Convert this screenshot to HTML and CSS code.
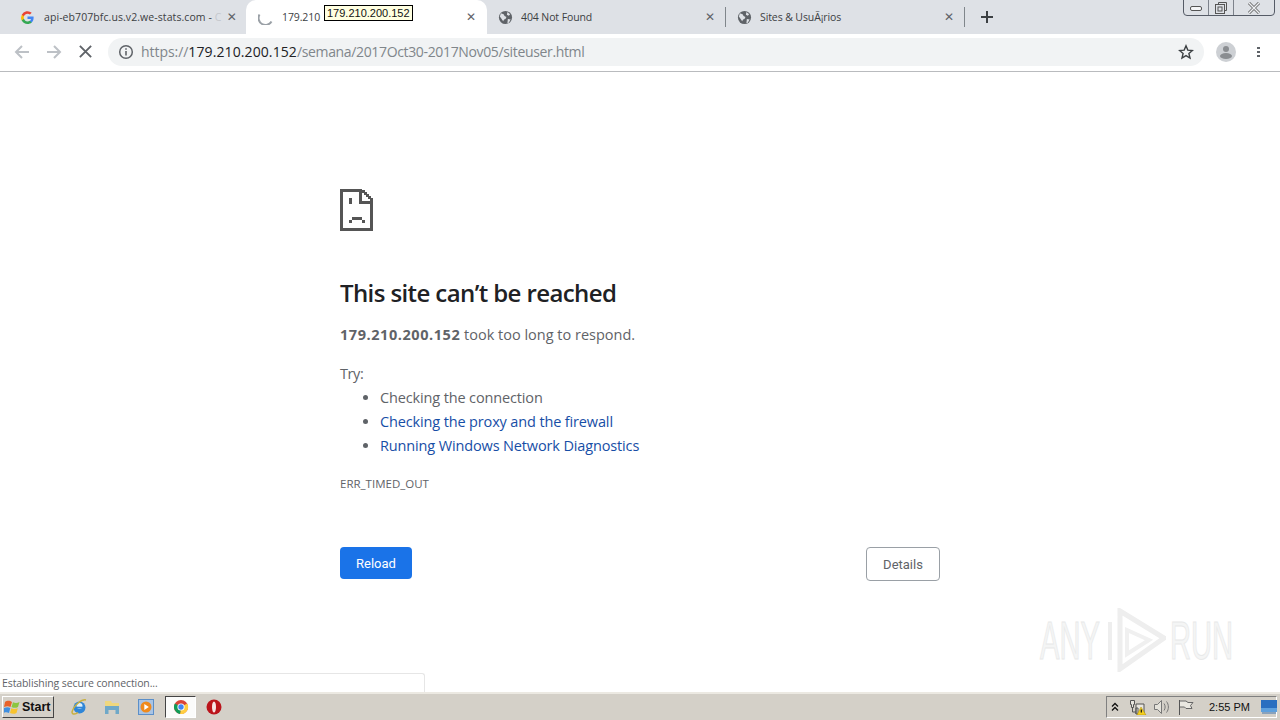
FILE: index.html
```html
<!DOCTYPE html>
<html lang="en">
<head>
<meta charset="utf-8">
<title>179.210.200.152</title>
<link rel="stylesheet" href="styles.css">
</head>
<body>
<div class="tabstrip">
  <div class="tab tab-first">
    <svg class="favicon" viewBox="0 0 16 16"><path d="M14.500 8.200c0-.5 0-1-.1-1.400H8v2.700h3.700a3.200 3.200 0 0 1-1.400 2.100v1.700h2.200c1.300-1.200 2-3 2-5.100z" fill="#4285f4"/><path d="M8 14.800c1.800 0 3.400-.6 4.500-1.600l-2.200-1.700c-.6.400-1.400.7-2.300.7-1.800 0-3.200-1.200-3.800-2.800H1.900v1.700A6.800 6.800 0 0 0 8 14.800z" fill="#34a853"/><path d="M4.200 9.400a4 4 0 0 1 0-2.700V5H1.900a6.800 6.800 0 0 0 0 6.100z" fill="#fbbc05"/><path d="M8 3.900c1 0 1.900.3 2.600 1l1.900-1.900A6.800 6.800 0 0 0 1.900 5l2.300 1.700C4.800 5.100 6.200 3.900 8 3.900z" fill="#ea4335"/></svg>
    <span class="tab-title">api-eb707bfc.us.v2.we-stats.com - <span class="fade">C</span></span>
    <span class="tab-close">✕</span>
  </div>
  <div class="tab tab-active">
    <svg class="favicon spinner" viewBox="0 0 16 16"><path d="M1.500 5.500a6.800 6.800 0 0 0 12 7" fill="none" stroke="#9aa0a6" stroke-width="2"/></svg>
    <span class="tab-title">179.210</span>
    <span class="tab-close">✕</span>
  </div>
  <div class="tab tab-third">
    <svg class="favicon" viewBox="0 0 16 16"><circle cx="8" cy="8" r="7" fill="#5f6368"/><path d="M3 3.500l3 1 1 2 2 1-1 2-1.500.5-1 2L3.500 9 2 7zM10 2l3 2.500-1.500 1.500-2-1zM10.500 9.500l3 .5-2 3.500-1.500.5z" fill="#dee1e6"/></svg>
    <span class="tab-title">404 Not Found</span>
    <span class="tab-close">✕</span>
  </div>
  <div class="tab-sep"></div>
  <div class="tab tab-fourth">
    <svg class="favicon" viewBox="0 0 16 16"><circle cx="8" cy="8" r="7" fill="#5f6368"/><path d="M3 3.500l3 1 1 2 2 1-1 2-1.500.5-1 2L3.500 9 2 7zM10 2l3 2.500-1.500 1.500-2-1zM10.500 9.500l3 .5-2 3.500-1.500.5z" fill="#dee1e6"/></svg>
    <span class="tab-title">Sites &amp; UsuÃ¡rios</span>
    <span class="tab-close">✕</span>
  </div>
  <div class="tab-sep"></div>
  <svg class="new-tab" viewBox="0 0 14 14"><path d="M7 1v12M1 7h12" stroke="#3c4043" stroke-width="2"/></svg>
  <div class="window-controls">
    <div class="wc wc-min"><svg viewBox="0 0 16 8" width="16" height="8"><rect x="2.500" y="2.500" width="11" height="4" rx="1.500" fill="#f4f5f7" stroke="#555"/></svg></div>
    <div class="wc wc-max"><svg viewBox="0 0 14 14" width="14" height="14"><path d="M4.500 3.500v-2h8v8h-2" fill="none" stroke="#555"/><rect x="1.500" y="3.500" width="9" height="9" fill="none" stroke="#555"/><rect x="4" y="6" width="4" height="4" fill="none" stroke="#555"/></svg></div>
    <div class="wc wc-close"><svg viewBox="0 0 14 12" width="14" height="12"><path d="M2 1l10 10M12 1L2 11" stroke="#666" stroke-width="3"/><path d="M2 1l10 10M12 1L2 11" stroke="#eef0f3" stroke-width="1.400"/></svg></div>
  </div>
</div>

<div class="toolbar">
  <svg class="nav-icon" viewBox="0 0 16 16"><path d="M15 8H2M8 2L2 8l6 6" fill="none" stroke="#bdc1c6" stroke-width="2"/></svg>
  <svg class="nav-icon" viewBox="0 0 16 16"><path d="M1 8h13M8 2l6 6-6 6" fill="none" stroke="#bdc1c6" stroke-width="2"/></svg>
  <svg class="nav-icon nav-stop" viewBox="0 0 16 16"><path d="M2 2l12 12M14 2L2 14" stroke="#5f6368" stroke-width="2"/></svg>
  <div class="omnibox">
    <svg class="info" viewBox="0 0 16 16"><circle cx="8" cy="8" r="6.300" fill="none" stroke="#5f6368" stroke-width="1.500"/><path d="M8 7v4.500M8 4.300v1.500" stroke="#5f6368" stroke-width="1.600"/></svg>
    <span class="url"><span class="url-dim">https://</span><span class="url-host">179.210.200.152</span><span class="url-dim url-path">/semana/2017Oct30-2017Nov05/siteuser.html</span></span>
    <svg class="star" viewBox="0 0 16 16"><path d="M8 1.800l1.800 4.300 4.600.4-3.500 3 1.100 4.500L8 11.600 4 14l1.100-4.500-3.500-3 4.600-.4z" fill="none" stroke="#3c4043" stroke-width="1.400"/></svg>
  </div>
  <svg class="avatar" viewBox="0 0 20 20"><circle cx="10" cy="10" r="10" fill="#cdd0d4"/><circle cx="10" cy="7" r="3" fill="#8a8d91"/><ellipse cx="10" cy="14" rx="6" ry="3" fill="#8a8d91"/></svg>
  <div class="menu-dots"><i></i><i></i><i></i></div>
</div>

<main class="page">
  <div class="error">
    <svg class="sad-icon" viewBox="0 0 33 42" shape-rendering="crispEdges">
      <g fill="#555">
        <rect x="0" y="0" width="22" height="3"/>
        <rect x="0" y="0" width="3" height="42"/>
        <rect x="0" y="39" width="33" height="3"/>
        <rect x="30" y="9" width="3" height="33"/>
        <rect x="19" y="0" width="3" height="15"/>
        <rect x="19" y="12" width="14" height="3"/>
        <rect x="22" y="1" width="3" height="3"/>
        <rect x="24" y="3" width="3" height="3"/>
        <rect x="26" y="5" width="3" height="3"/>
        <rect x="28" y="7" width="3" height="3"/>
        <rect x="9" y="9" width="3" height="6"/>
        <rect x="12" y="28" width="10" height="3"/>
        <rect x="9" y="31" width="3" height="3"/>
        <rect x="22" y="31" width="3" height="3"/>
      </g>
    </svg>
    <h1 class="headline">This site can’t be reached</h1>
    <p class="summary"><strong>179.210.200.152</strong> took too long to respond.</p>
    <p class="try">Try:</p>
    <ul class="suggestions">
      <li>Checking the connection</li>
      <li><a href="#">Checking the proxy and the firewall</a></li>
      <li><a href="#">Running Windows Network Diagnostics</a></li>
    </ul>
    <div class="code">ERR_TIMED_OUT</div>
    <div class="buttons">
      <button class="btn btn-reload">Reload</button>
      <button class="btn btn-details">Details</button>
    </div>
  </div>
</main>

<div class="taskbar">
  <div class="start">
    <svg class="start-logo" viewBox="0 0 18 16"><path d="M1 3c3-2 5-1 7 0L6.500 8C4.500 7 3 6.800 0 8z" fill="#e8622a"/><path d="M9 3.300c2 1 4 1.200 6.500-.3L14 8c-2.300 1.300-4.500 1-6.500 0z" fill="#8cc63f"/><path d="M0 9c3-1.200 4.500-1 6.300 0L5 14c-2-1-3.500-1-6 0z" fill="#3f8fe0"/><path d="M7.300 9.300c2 1 4.200 1 6.500 0L12.500 14c-2.500 1.200-4.500 1-6.500 0z" fill="#f7c32e"/></svg>
    <span>Start</span>
  </div>
  <div class="quick">
    <svg class="qi" viewBox="0 0 16 16"><circle cx="8.500" cy="8.500" r="6" fill="#2f86d8"/><circle cx="8.500" cy="7" r="3" fill="#dff0fb"/><rect x="4.500" y="7.700" width="9" height="1.800" fill="#2f86d8"/><path d="M15 1C11 0 3 6 1 13c0 3 4 2 6 .5" fill="none" stroke="#c9b040" stroke-width="1.500"/></svg>
    <svg class="qi qi-folder" viewBox="0 0 16 16"><path d="M1 2h6l1 2h7v5H1z" fill="#efd77e"/><path d="M1 7h14v8h-3.500v-4h-7v4H1z" fill="#6fa8c8"/></svg>
    <svg class="qi qi-media" viewBox="0 0 16 16"><rect x=".5" y=".5" width="15" height="15" fill="#a9c4e4" stroke="#5b8fc9"/><circle cx="8" cy="8" r="5.500" fill="#ef8a1d"/><path d="M6.300 5l4.500 3-4.500 3z" fill="#fff"/></svg>
    <div class="qi-chrome-box">
      <svg class="qi" viewBox="0 0 16 16"><circle cx="8" cy="8" r="7" fill="#db4437"/><path d="M8 8L2 11.500A7 7 0 0 1 1.900 4.500z" fill="#0f9d58"/><path d="M8 8l6.100-3.500A7 7 0 0 1 7 15z" fill="#ffcd40"/><path d="M8 8L2 11.500A7 7 0 0 0 7 15z" fill="#0f9d58"/><circle cx="8" cy="8" r="3.600" fill="#fff"/><circle cx="8" cy="8" r="2.700" fill="#4285f4"/></svg>
    </div>
    <svg class="qi qi-opera" viewBox="0 0 16 16"><circle cx="8" cy="8" r="7.500" fill="#bb141b"/><ellipse cx="8" cy="8" rx="2" ry="5.500" fill="#f7e4e4"/></svg>
  </div>
  <div class="tray">
    <svg class="tray-up" viewBox="0 0 8 10"><path d="M1 4.500l3-3 3 3M1 8.500l3-3 3 3" fill="none" stroke="#111" stroke-width="1.300"/></svg>
    <svg class="tray-icon" viewBox="0 0 18 16"><path d="M1.500 1.500h4v4h-1v3h-2v-3h-1zM7 5h8v10H7z" fill="#e8e6df" stroke="#555"/><path d="M7 15V9h2v6M3.500 8.500V13H7" fill="none" stroke="#555"/><path d="M12 8l5 8H8z" fill="#f5cf1f" stroke="#a98a00" stroke-width=".5"/><rect x="11.700" y="10.500" width="1.200" height="3" fill="#111"/></svg>
    <svg class="tray-icon" viewBox="0 0 18 16"><path d="M1.500 5.500h3l4-4v13l-4-4h-3z" fill="#e4e2da" stroke="#777"/><path d="M11 4.500c1.500 2 1.500 5 0 7M13.500 2.500c2.500 3 2.500 8 0 11" fill="none" stroke="#777"/></svg>
    <svg class="tray-icon" viewBox="0 0 18 16"><path d="M2.500 1v15" stroke="#555"/><path d="M3 2h6l2 1.500h5l-2.500 3 1.500 3H9L7.500 8H3" fill="#e9e7e0" stroke="#666"/></svg>
    <span class="clock">2:55 PM</span>
    <svg class="show-desktop" viewBox="0 0 16 14"><rect width="16" height="12" fill="#2a6fc0"/><rect y="8" width="16" height="4" fill="#5ea0dd"/><rect x="1" y="12" width="14" height="2" fill="#8aa2bb"/></svg>
  </div>
</div>

<div class="tooltip">179.210.200.152</div>
<div class="status-bubble">Establishing secure connection...</div>
<div class="watermark">
  <span class="wm-text">ANY</span>
  <svg class="wm-logo" viewBox="0 0 59 64"><path d="M3 14v38" fill="none" stroke="#eeeeee" stroke-width="4"/><path d="M13 3l44 27-44 31z" fill="none" stroke="#eeeeee" stroke-width="5"/><path d="M20 22l22 10-22 14z" fill="none" stroke="#f0f0f0" stroke-width="4"/></svg>
  <span class="wm-text">RUN</span>
</div>
</body>
</html>
```
FILE: styles.css
```css
* { box-sizing: border-box; }
html, body { margin: 0; height: 100%; }
body {
  width: 1280px;
  height: 720px;
  overflow: hidden;
  display: flex;
  flex-direction: column;
  font-family: "Open Sans", "Liberation Sans", sans-serif;
  background: #fff;
  position: relative;
}

/* Tab strip */
.tabstrip {
  height: 34px;
  flex: none;
  background: #dee1e6;
  display: flex;
  align-items: center;
  position: relative;
}
.tab {
  height: 34px;
  display: flex;
  align-items: center;
  font-size: 10.500px;
  color: #3c4043;
  letter-spacing: -.1px;
  flex: none;
}
.tab-first { width: 246px; padding-left: 20px; padding-right: 8px; letter-spacing: .08px; }
.tab-active {
  width: 241px;
  padding-left: 12px;
  padding-right: 11px;
  background: #fff;
  border-radius: 10px 10px 0 0;
}
.tab-third { width: 238px; padding-left: 11px; padding-right: 10px; }
.tab-fourth { width: 238px; padding-left: 11px; padding-right: 10px; }
.tab-first .tab-close { margin-right: 1px; }
.favicon { width: 15px; height: 15px; flex: none; }
.spinner { width: 16px; height: 16px; }
.tab-title { margin-left: 8px; flex: 1; white-space: nowrap; overflow: hidden; }
.tab-first .tab-title { margin-left: 9px; }
.fade { color: #c5c8cd; }
.tab-close { font-size: 12px; color: #5f6368; font-weight: 700; font-family: "DejaVu Sans", sans-serif; line-height: 1; }
.tab-sep { width: 1px; height: 20px; background: #80868b; flex: none; }
.new-tab { width: 14px; height: 14px; margin-left: 15px; flex: none; }
.window-controls {
  position: absolute;
  top: -1px;
  right: 5px;
  width: 92px;
  height: 17px;
  display: flex;
  border: 1px solid #555b66;
  border-radius: 0 0 4px 4px;
}
.wc { display: flex; align-items: center; justify-content: center; }
.wc-min { width: 25px; border-right: 1px solid #7d828b; }
.wc-max { width: 25px; border-right: 1px solid #7d828b; }
.wc-close { flex: 1; }

/* Toolbar */
.toolbar {
  height: 38px;
  flex: none;
  background: #fff;
  border-bottom: 1px solid #b9bbbe;
  display: flex;
  align-items: center;
  padding-left: 14px;
  padding-bottom: 2px;
}
.nav-icon { width: 16px; height: 16px; flex: none; margin-right: 16px; }
.nav-stop { width: 15px; height: 15px; margin-right: 15px; }
.omnibox {
  width: 1096px;
  height: 28px;
  border-radius: 14px;
  background: #f1f3f4;
  display: flex;
  align-items: center;
  padding-left: 10px;
  padding-right: 10px;
}
.info { width: 16px; height: 16px; flex: none; }
.url { flex: 1; margin-left: 7px; font-size: 14px; color: #202124; white-space: nowrap; letter-spacing: -.05px; }
.url-dim { color: #80868b; }
.url-host { letter-spacing: .1px; }
.url-path { letter-spacing: -.35px; }
.star { width: 16px; height: 16px; flex: none; }
.avatar { width: 20px; height: 20px; margin-left: 12px; flex: none; }
.menu-dots { display: flex; flex-direction: column; gap: 2px; margin-left: 21px; }
.menu-dots i { display: block; width: 3px; height: 2px; background: #5f6368; }

/* Error page */
.page { flex: 1; padding-left: 340px; min-height: 0; }
.error { width: 600px; padding-top: 117px; }
.sad-icon { display: block; width: 33px; height: 42px; }
.headline {
  margin: 45px 0 0;
  font-size: 24px;
  line-height: 34px;
  font-weight: 600;
  color: #202124;
  letter-spacing: -.6px;
}
.summary {
  margin: 13px 0 0;
  font-size: 14.500px;
  line-height: 24px;
  color: #5f6368;
}
.summary strong { font-weight: 700; letter-spacing: .56px; }
.try { margin: 15px 0 0; font-size: 14.500px; line-height: 24px; color: #5f6368; letter-spacing: -.4px; }
.suggestions { margin: 0; padding-left: 40px; font-size: 14.500px; line-height: 24px; color: #5f6368; letter-spacing: -.14px; }
.suggestions a { color: #174ea6; text-decoration: none; }
.code { margin-top: 18px; font-size: 11.500px; line-height: 16px; color: #5f6368; }
.buttons { margin-top: 55px; display: flex; justify-content: space-between; align-items: flex-start; }
.btn { font-family: Roboto, sans-serif; font-size: 13px; border-radius: 4px; padding: 0; }
.btn-reload { width: 72px; height: 32px; background: #1a73e8; border: none; color: #fff; }
.btn-details { width: 74px; height: 34px; background: #fff; border: 1px solid #9aa0a6; color: #5f6368; }

/* Taskbar */
.taskbar {
  height: 28px;
  flex: none;
  background: #d4d0c8;
  border-top: 2px solid #ece9e2;
  display: flex;
  align-items: center;
  position: relative;
}
.start {
  margin-left: 2px;
  width: 52px;
  height: 22px;
  display: flex;
  align-items: center;
  gap: 0;
  padding-left: 1px;
  font-family: "Liberation Sans", sans-serif;
  font-weight: 700;
  font-size: 12.500px;
  color: #111;
  border: 1px solid;
  border-color: #fff #444 #444 #fff;
}
.start-logo { width: 18px; height: 16px; flex: none; }
.quick { display: flex; align-items: center; margin-left: 17px; }
.qi { width: 16px; height: 16px; flex: none; }
.qi-folder { margin-left: 17px; }
.qi-media { margin-left: 18px; }
.qi-chrome-box {
  width: 31px;
  height: 22px;
  margin-left: 11px;
  background: #fbfbfa;
  border: 1px solid;
  border-color: #444 #fff #fff #444;
  display: flex;
  align-items: center;
  justify-content: center;
}
.qi-opera { margin-left: 10px; }
.tray {
  margin-left: auto;
  margin-right: 3px;
  width: 171px;
  height: 22px;
  display: flex;
  align-items: center;
  border: 1px solid;
  border-color: #808080 #fff #fff #808080;
  padding-left: 4px;
}
.tray-up { width: 8px; height: 10px; flex: none; }
.tray-icon { width: 18px; height: 16px; flex: none; margin-left: 6px; }
.tray-up + .tray-icon { margin-left: 10px; }
.clock { margin-left: 14px; font-family: "Liberation Sans", sans-serif; font-size: 11px; color: #111; white-space: nowrap; }
.show-desktop { width: 16px; height: 14px; margin-left: 11px; flex: none; }

/* Overlays */
.tooltip {
  position: absolute;
  left: 324px;
  top: 5px;
  height: 16px;
  padding: 0 2px;
  background: #ffffe1;
  border: 1px solid #000;
  font-family: "Liberation Sans", sans-serif;
  font-size: 11px;
  line-height: 14px;
  color: #111;
  white-space: nowrap;
}
.status-bubble {
  position: absolute;
  left: 0;
  top: 673px;
  width: 425px;
  height: 19px;
  padding-left: 2px;
  background: #fff;
  border: 1px solid #e6e6e6;
  border-width: 1px 1px 0 0;
  border-top-right-radius: 3px;
  font-size: 10.500px;
  line-height: 19px;
  color: #5f6368;
  letter-spacing: -.1px;
}
.watermark {
  position: absolute;
  left: 1040px;
  top: 608px;
  width: 192px;
  height: 64px;
  display: flex;
  align-items: center;
  justify-content: space-between;
}
.wm-text {
  display: block;
  width: 62px;
  font-family: "Liberation Sans", sans-serif;
  font-size: 54px;
  line-height: 64px;
  white-space: nowrap;
  color: #f4f5f5;
  -webkit-text-stroke: 1px #e8e9e9;
  transform: scaleX(.54);
  transform-origin: left center;
}
.wm-logo { width: 59px; height: 64px; flex: none; }
```
